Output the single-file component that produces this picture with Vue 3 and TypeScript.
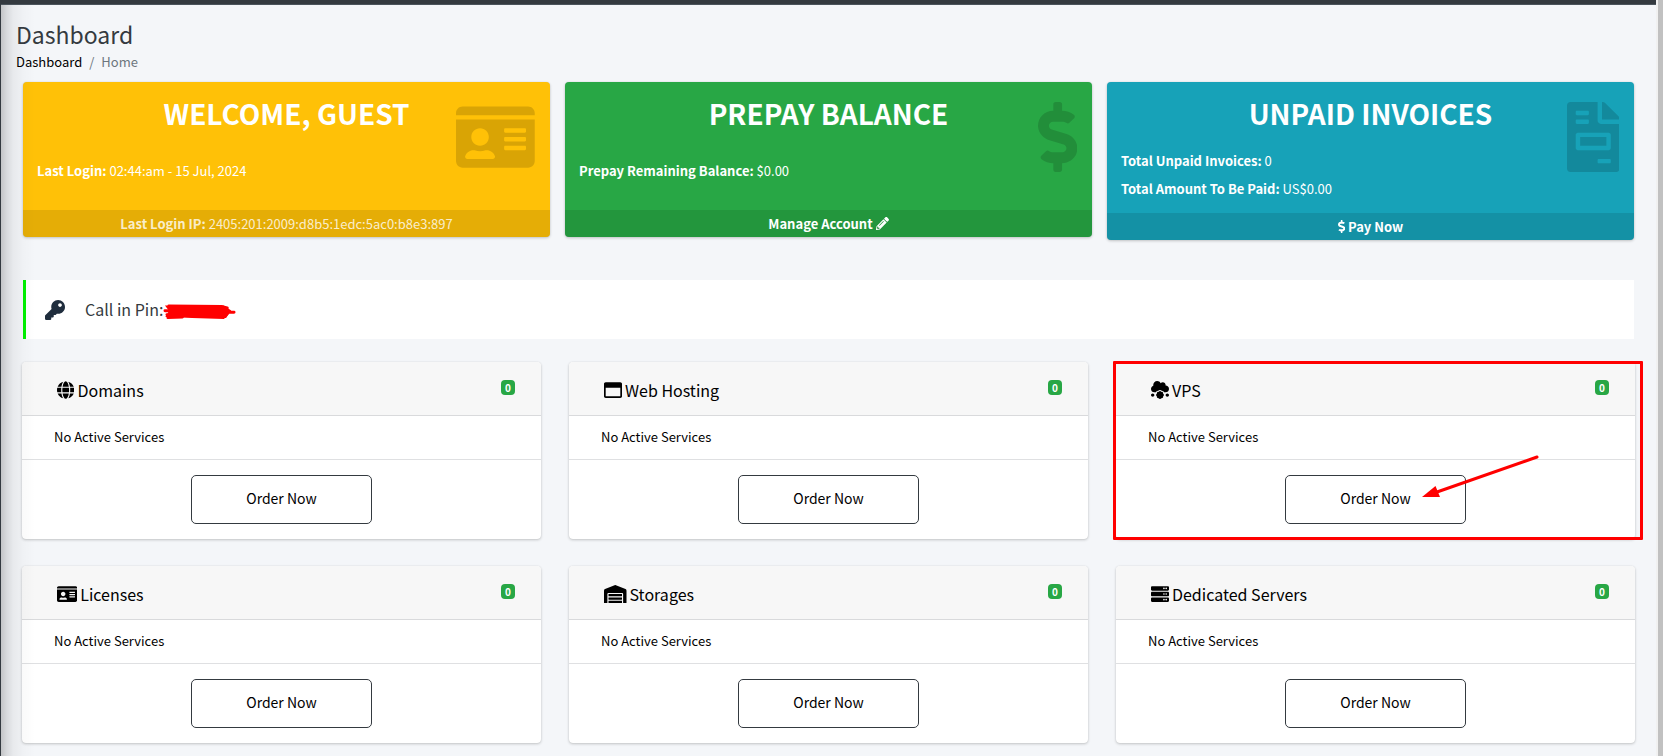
<script setup lang="ts">
interface Glyph {
  w: number
  d: string
}

interface Service {
  name: string
  icon: string
  count: number
  highlighted?: boolean
}

const rackUnit = (y: number): string =>
  `M480 ${y + 128}H32c-17.7 0-32-14.3-32-32V${y + 32}c0-17.7 14.3-32 32-32h448c17.7 0 32 14.3 32 32v64c0 17.7-14.3 32-32 32z` +
  'm-48-88c-13.3 0-24 10.7-24 24s10.7 24 24 24 24-10.7 24-24-10.7-24-24-24z' +
  'm-64 0c-13.3 0-24 10.7-24 24s10.7 24 24 24 24-10.7 24-24-10.7-24-24-24z'

const glyphs: Record<string, Glyph> = {
  idCard: {
    w: 576,
    d: 'M528 32H48C21.5 32 0 53.5 0 80v16h576V80c0-26.5-21.5-48-48-48zM0 432c0 26.5 21.5 48 48 48h480c26.5 0 48-21.5 48-48V128H0v304zm352-232c0-4.4 3.6-8 8-8h144c4.4 0 8 3.6 8 8v16c0 4.4-3.6 8-8 8H360c-4.4 0-8-3.6-8-8v-16zm0 64c0-4.4 3.6-8 8-8h144c4.4 0 8 3.6 8 8v16c0 4.4-3.6 8-8 8H360c-4.4 0-8-3.6-8-8v-16zm0 64c0-4.4 3.6-8 8-8h144c4.4 0 8 3.6 8 8v16c0 4.4-3.6 8-8 8H360c-4.4 0-8-3.6-8-8v-16zM176 192c35.3 0 64 28.7 64 64s-28.7 64-64 64-64-28.7-64-64 28.7-64 64-64zM67.1 396.2C75.5 370.5 99.6 352 128 352h8.2c12.3 5.1 25.7 8 39.8 8s27.6-2.9 39.8-8h8.2c28.4 0 52.5 18.5 60.9 44.2 3.2 9.9-5.2 19.8-15.6 19.8H82.7c-10.4 0-18.8-10-15.6-19.8z',
  },
  dollar: {
    w: 288,
    d: 'M209.2 233.4l-108-31.6C88.7 198.2 80 186.5 80 173.5c0-16.3 13.2-29.5 29.5-29.5h66.3c12.2 0 24.2 3.7 34.2 10.5 6.1 4.1 14.3 3.1 19.5-2l34.8-34c7.1-6.9 6.1-18.4-1.8-24.5C238 74.8 207.4 64.1 176 64V16c0-8.8-7.2-16-16-16h-32c-8.8 0-16 7.2-16 16v48h-2.5C45.8 64-5.4 118.7.5 183.6c4.2 46.1 39.4 83.6 83.8 96.6l102.5 30c12.5 3.7 21.2 15.3 21.2 28.3 0 16.3-13.2 29.5-29.5 29.5h-66.3C100 368 88 364.3 78 357.5c-6.1-4.1-14.3-3.1-19.5 2l-34.8 34c-7.1 6.9-6.1 18.4 1.8 24.5 24.5 19.2 55.1 29.9 86.5 30v48c0 8.8 7.2 16 16 16h32c8.8 0 16-7.2 16-16v-48.2c46.6-.9 90.3-28.6 105.7-72.7 21.5-61.6-14.6-124.8-72.5-141.7z',
  },
  invoice: {
    w: 384,
    d: 'M288 256H96v64h192v-64zm89-151L279.1 7c-4.5-4.5-10.6-7-17-7H256v128h128v-6.1c0-6.3-2.5-12.4-7-16.9zm-153 31V0H24C10.7 0 0 10.7 0 24v464c0 13.3 10.7 24 24 24h336c13.3 0 24-10.7 24-24V160H248c-13.2 0-24-10.8-24-24zM64 72c0-4.4 3.6-8 8-8h80c4.4 0 8 3.6 8 8v16c0 4.4-3.6 8-8 8H72c-4.4 0-8-3.6-8-8V72zm0 64c0-4.4 3.6-8 8-8h80c4.4 0 8 3.6 8 8v16c0 4.4-3.6 8-8 8H72c-4.4 0-8-3.6-8-8v-16zm256 304c0 4.4-3.6 8-8 8h-80c-4.4 0-8-3.6-8-8v-16c0-4.4 3.6-8 8-8h80c4.4 0 8 3.6 8 8v16zm0-200v96c0 8.8-7.2 16-16 16H80c-8.8 0-16-7.2-16-16v-96c0-8.8 7.2-16 16-16h224c8.8 0 16 7.2 16 16z',
  },
  pencil: {
    w: 512,
    d: 'M497.9 142.1l-46.1 46.1c-4.7 4.7-12.3 4.7-17 0l-111-111c-4.7-4.7-4.7-12.3 0-17l46.1-46.1c18.7-18.7 49.1-18.7 67.9 0l60.1 60.1c18.8 18.7 18.8 49.1 0 67.9zM284.2 99.8L21.6 362.4.4 483.9c-2.9 16.4 11.4 30.6 27.8 27.8l121.5-21.3 262.6-262.6c4.7-4.7 4.7-12.3 0-17l-111-111c-4.8-4.7-12.4-4.7-17.1 0zM124.1 339.9c-5.5-5.5-5.5-14.3 0-19.8l154-154c5.5-5.5 14.3-5.5 19.8 0s5.5 14.3 0 19.8l-154 154c-5.5 5.5-14.3 5.5-19.8 0zM88 424h48v36.3l-64.5 11.3-31.1-31.1L51.7 376H88v48z',
  },
  key: {
    w: 512,
    d: 'M512 176C512 273.2 433.2 352 336 352c-11.2 0-22.2-1.1-32.8-3.1l-24 27A24 24 0 0 1 261.2 384H224v40c0 13.3-10.7 24-24 24h-40v40c0 13.3-10.7 24-24 24H24c-13.3 0-24-10.7-24-24v-78.1c0-6.4 2.5-12.5 7-17l161.8-161.8C163.1 213.8 160 195.3 160 176 160 78.8 238.8 0 336 0 433.5 0 512 78.5 512 176zM336 128c0 26.5 21.5 48 48 48s48-21.5 48-48-21.5-48-48-48-48 21.5-48 48z',
  },
  globe: {
    w: 496,
    d: 'M336.5 160C322 70.7 287.8 8 248 8s-74 62.7-88.5 152h177zM152 256c0 22.2 1.2 43.5 3.3 64h185.3c2.1-20.5 3.3-41.8 3.3-64s-1.2-43.5-3.3-64H155.3c-2.1 20.5-3.3 41.8-3.3 64zm324.7-96c-28.6-67.9-86.5-120.4-158-141.6 24.4 33.8 41.2 84.7 50 141.6h108zM177.2 18.4C105.8 39.6 47.8 92.1 19.3 160h108c8.7-56.9 25.5-107.8 49.9-141.6zM487.4 192H372.7c2.1 21 3.3 42.5 3.3 64s-1.2 43-3.3 64h114.6c5.5-20.5 8.6-41.8 8.6-64s-3.1-43.5-8.5-64zM120 256c0-21.5 1.2-43 3.3-64H8.6C3.2 212.5 0 233.8 0 256s3.2 43.5 8.6 64h114.6c-2-21-3.2-42.5-3.2-64zm39.5 96c14.5 89.3 48.7 152 88.5 152s74-62.7 88.5-152h-177zm159.3 141.6c71.4-21.2 129.4-73.7 158-141.6h-108c-8.8 56.9-25.6 107.8-50 141.6zM19.3 352c28.6 67.9 86.5 120.4 158 141.6-24.4-33.8-41.2-84.7-50-141.6h-108z',
  },
  window: {
    w: 512,
    d: 'M464 32H48C21.5 32 0 53.5 0 80v352c0 26.5 21.5 48 48 48h416c26.5 0 48-21.5 48-48V80c0-26.5-21.5-48-48-48zm0 394c0 3.3-2.7 6-6 6H54c-3.3 0-6-2.7-6-6V192h416v234z',
  },
  cloud: {
    w: 512,
    d: 'M48 352c-26.5 0-48 21.5-48 48s21.5 48 48 48 48-21.5 48-48-21.5-48-48-48zm416 0c-26.5 0-48 21.5-48 48s21.5 48 48 48 48-21.5 48-48-21.5-48-48-48zm-119 11.1c4.6-14.5 1.6-30.8-9.8-42.3-11.5-11.5-27.8-14.4-42.3-9.9-7-13.5-20.7-23-36.9-23s-29.9 9.5-36.9 23c-14.5-4.6-30.8-1.6-42.3 9.9-11.5 11.5-14.4 27.8-9.9 42.3-13.5 7-23 20.7-23 36.9s9.5 29.9 23 36.9c-4.6 14.5-1.6 30.8 9.9 42.3 8.2 8.2 18.9 12.3 29.7 12.3 4.3 0 8.5-1.1 12.6-2.5 7 13.5 20.7 23 36.9 23s29.9-9.5 36.9-23c4.1 1.3 8.3 2.5 12.6 2.5 10.8 0 21.5-4.1 29.7-12.3 11.5-11.5 14.4-27.8 9.8-42.3 13.5-7 23-20.7 23-36.9s-9.5-29.9-23-36.9zM512 224c0-53-43-96-96-96-.6 0-1.1.2-1.6.2 1.1-5.2 1.6-10.6 1.6-16.2 0-44.2-35.8-80-80-80-24.6 0-46.3 11.3-61 28.8C256.4 24.8 219.3 0 176 0 114.1 0 64 50.1 64 112c0 7.3.8 14.3 2.1 21.2C27.8 145.8 0 181.5 0 224c0 53 43 96 96 96h43.4c3.6-8 8.4-15.4 14.8-21.8 13.5-13.5 31.5-21.1 50.8-21.3 13.5-13.2 31.7-20.9 51-20.9s37.5 7.7 51 20.9c19.3.2 37.3 7.8 50.8 21.3 6.4 6.4 11.3 13.8 14.8 21.8H416c53 0 96-43 96-96z',
  },
  warehouse: {
    w: 640,
    d: 'M504 352H136.4c-4.4 0-8 3.6-8 8l-.1 48c0 4.4 3.6 8 8 8H504c4.4 0 8-3.6 8-8v-48c0-4.4-3.6-8-8-8zm0 96H136.1c-4.4 0-8 3.6-8 8l-.1 48c0 4.4 3.6 8 8 8h368c4.4 0 8-3.6 8-8v-48c0-4.4-3.6-8-8-8zm0-192H136.6c-4.4 0-8 3.6-8 8l-.1 48c0 4.4 3.6 8 8 8H504c4.4 0 8-3.6 8-8v-48c0-4.4-3.6-8-8-8zm106.5-139L338.4 3.7a48.2 48.2 0 0 0-36.9 0L29.5 117C11.7 124.5 0 141.9 0 161.3V504c0 4.4 3.6 8 8 8h80c4.4 0 8-3.6 8-8V256c0-17.6 14.6-32 32.6-32h382.8c18 0 32.6 14.4 32.6 32v248c0 4.4 3.6 8 8 8h80c4.4 0 8-3.6 8-8V161.3c0-19.4-11.7-36.8-29.5-44.3z',
  },
  server: { w: 512, d: rackUnit(32) + rackUnit(192) + rackUnit(352) },
}

const box = (name: string): string => `0 0 ${glyphs[name].w} 512`

const services: Service[] = [
  { name: 'Domains', icon: 'globe', count: 0 },
  { name: 'Web Hosting', icon: 'window', count: 0 },
  { name: 'VPS', icon: 'cloud', count: 0, highlighted: true },
  { name: 'Licenses', icon: 'idCard', count: 0 },
  { name: 'Storages', icon: 'warehouse', count: 0 },
  { name: 'Dedicated Servers', icon: 'server', count: 0 },
]
</script>

<template>
  <div class="shell">
    <div class="sidebar-edge"></div>
    <div class="page">
      <div class="topbar"></div>
      <header class="page-head">
        <h1>Dashboard</h1>
        <nav class="crumbs" aria-label="Breadcrumb">
          <a href="#">Dashboard</a>
          <span>/</span>
          <span>Home</span>
        </nav>
      </header>

      <main>
        <section class="summary">
          <article class="tile amber">
            <svg class="tile-icon" :viewBox="box('idCard')"><path :d="glyphs.idCard.d" /></svg>
            <div class="tile-body">
              <h2>WELCOME, GUEST</h2>
              <p class="single"><b>Last Login:</b> 02:44:am - 15 Jul, 2024</p>
            </div>
            <div class="tile-foot faded"><span><b>Last Login IP:</b> 2405:201:2009:d8b5:1edc:5ac0:b8e3:897</span></div>
          </article>

          <article class="tile green">
            <svg class="tile-icon" :viewBox="box('dollar')"><path :d="glyphs.dollar.d" /></svg>
            <div class="tile-body">
              <h2>PREPAY BALANCE</h2>
              <p class="single"><b>Prepay Remaining Balance:</b> $0.00</p>
            </div>
            <a class="tile-foot" href="#">
              <b>Manage Account</b>
              <svg :viewBox="box('pencil')"><path :d="glyphs.pencil.d" /></svg>
            </a>
          </article>

          <article class="tile teal">
            <svg class="tile-icon" :viewBox="box('invoice')"><path :d="glyphs.invoice.d" /></svg>
            <div class="tile-body">
              <h2>UNPAID INVOICES</h2>
              <p><b>Total Unpaid Invoices:</b> 0</p>
              <p><b>Total Amount To Be Paid:</b> US$0.00</p>
            </div>
            <a class="tile-foot" href="#">
              <svg :viewBox="box('dollar')"><path :d="glyphs.dollar.d" /></svg>
              <b>Pay Now</b>
            </a>
          </article>
        </section>

        <section class="pin">
          <svg class="pin-key" :viewBox="box('key')"><path :d="glyphs.key.d" /></svg>
          <span>Call in Pin:</span>
          <svg class="scribble" viewBox="0 0 76 18" aria-label="Hidden pin">
            <path class="fill" d="M5 4L62 4L68 8L64 14L5 13L8 8z" />
            <path d="M6 3L60 3.500L66 5M2 8L16 8M58 9.500L73 9.500M4 12L30 14L62 15L66 11M5 15L20 14.500" />
          </svg>
        </section>

        <section class="services">
          <article v-for="s in services" :key="s.name" class="card">
            <header>
              <svg :viewBox="box(s.icon)"><path :d="glyphs[s.icon].d" /></svg>
              <h3>{{ s.name }}</h3>
              <span class="badge">{{ s.count }}</span>
            </header>
            <p>No Active Services</p>
            <footer>
              <button type="button">Order Now</button>
              <svg v-if="s.highlighted" class="arrow" viewBox="0 0 120 46">
                <path class="shaft" d="M115 3L15 38" />
                <path class="head" d="M0 43L13.500 32L18 43z" />
              </svg>
            </footer>
            <div v-if="s.highlighted" class="marker"></div>
          </article>
        </section>
      </main>
    </div>
    <div class="scroll-track"></div>
  </div>
</template>

<style>
body {
  margin: 0;
  background: #f4f6f9;
}
</style>

<style scoped>
* {
  box-sizing: border-box;
}

.shell {
  display: flex;
  min-height: 100vh;
  color: #212529;
  background: #f4f6f9;
  font: 13px/21px "Noto Sans CJK SC", "Noto Sans", sans-serif;
}

.sidebar-edge {
  position: relative;
  flex: none;
  width: 1px;
  background: #343a40;
}

.sidebar-edge::after {
  content: "";
  position: absolute;
  z-index: 2;
  top: 5px;
  bottom: 0;
  left: 1px;
  width: 34px;
  pointer-events: none;
  background: linear-gradient(to right, rgba(0, 0, 0, 0.2), rgba(0, 0, 0, 0.11) 18%, rgba(0, 0, 0, 0.05) 36%, rgba(0, 0, 0, 0.02) 65%, transparent);
}

.page {
  flex: 1;
  min-width: 0;
}

.topbar {
  height: 5px;
  background: #343a40;
  border-bottom: 1px solid #4b545c;
}

.scroll-track {
  flex: none;
  width: 7px;
  background: #c1c1c1;
  border-left: 2px solid #f1f1f1;
}

h1,
h2,
h3,
p {
  margin: 0;
}

.page-head {
  padding: 13px 15px 10px;
}

h1 {
  font-size: 23px;
  font-weight: 400;
  line-height: 33px;
  color: #343a40;
}

.crumbs {
  display: flex;
  gap: 7px;
  color: #6c757d;
}

.crumbs a {
  color: #000;
  text-decoration: none;
}

.summary {
  display: grid;
  grid-template-columns: repeat(3, 1fr);
  gap: 15px;
  align-items: start;
  padding: 0 22px;
  min-height: 198px;
}

.tile {
  position: relative;
  overflow: hidden;
  color: #fff;
  border-radius: 4px;
  box-shadow: 0 0 1px rgba(0, 0, 0, 0.13), 0 1px 3px rgba(0, 0, 0, 0.2);
}

.amber {
  background: #ffc107;
}

.green {
  background: #28a745;
}

.teal {
  background: #17a2b8;
}

.tile-icon {
  position: absolute;
  top: 20px;
  right: 15px;
  height: 70px;
  fill: rgba(0, 0, 0, 0.15);
}

.tile-body {
  padding: 12px 14px 10px;
}

h2 {
  margin-bottom: 15px;
  font-size: 28px;
  font-weight: 700;
  line-height: 38px;
  text-align: center;
}

.tile-body p {
  line-height: 28px;
}

.tile-body p.single {
  padding: 10px 0 15px;
}

.tile-foot {
  display: flex;
  justify-content: center;
  align-items: center;
  gap: 3px;
  height: 27px;
  color: #fff;
  text-decoration: none;
  background: rgba(0, 0, 0, 0.1);
}

.tile-foot svg {
  height: 13px;
  fill: currentColor;
}

.tile-foot.faded {
  color: rgba(255, 255, 255, 0.8);
}

.pin {
  display: flex;
  align-items: center;
  height: 59px;
  margin: 0 22px;
  padding-left: 19px;
  font-size: 16px;
  color: #343a40;
  background: #fff;
  border-left: 3px solid #00f000;
}

.pin-key {
  width: 20px;
  margin-right: 20px;
  fill: #1f2d3d;
}

.scribble {
  width: 74px;
  margin-top: 4px;
  fill: none;
  stroke: #f00;
  stroke-width: 3;
  stroke-linecap: round;
}

.scribble .fill {
  fill: #f00;
}

.services {
  display: grid;
  grid-template-columns: repeat(3, 1fr);
  gap: 27px 28px;
  padding: 23px 21px 12px;
}

.card {
  position: relative;
  color: #000;
  background: #fff;
  border-radius: 4px;
  box-shadow: 0 0 1px rgba(0, 0, 0, 0.13), 0 1px 3px rgba(0, 0, 0, 0.2);
}

.card header {
  display: flex;
  align-items: center;
  gap: 3px;
  height: 54px;
  padding: 2px 26px 0 35px;
  background: #f7f7f7;
  border-bottom: 1px solid #d9dadc;
  border-radius: 4px 4px 0 0;
}

.card header svg {
  height: 18px;
}

h3 {
  flex: 1;
  font-size: 16px;
  font-weight: 400;
  line-height: 24px;
}

.badge {
  width: 14px;
  margin-bottom: 4px;
  font-size: 10px;
  font-weight: 700;
  line-height: 15px;
  text-align: center;
  color: #fff;
  background: #28a745;
  border-radius: 4px;
}

.card p {
  padding: 10px 32px 12px;
  border-bottom: 1px solid #dfe0e2;
}

.card footer {
  position: relative;
  display: flex;
  justify-content: center;
  padding: 15px 0;
}

button {
  width: 35%;
  height: 49px;
  padding: 0 0 2px;
  font: inherit;
  font-size: 14px;
  color: #000;
  background: #fff;
  border: 1px solid #343a40;
  border-radius: 5px;
}

.marker {
  position: absolute;
  inset: -1px -8px -1px -3px;
  border: 3px solid #f00;
  border-radius: 1px;
}

.arrow {
  position: absolute;
  top: -6px;
  left: 59%;
  width: 120px;
}

.shaft {
  stroke: #f00;
  stroke-width: 3;
  stroke-linecap: round;
}

.head {
  fill: #f00;
}
</style>
